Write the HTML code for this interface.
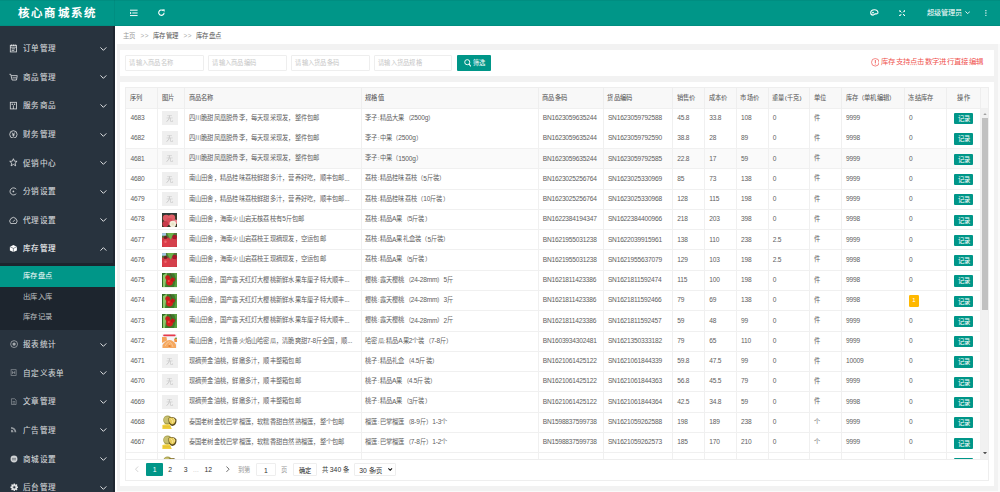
<!DOCTYPE html>
<html lang="zh-CN"><head><meta charset="utf-8">
<style>
*{box-sizing:border-box;margin:0;padding:0}
html,body{width:1000px;height:492px;overflow:hidden;background:#f2f2f2;font-family:"Liberation Sans",sans-serif;color:#666}
.abs{position:absolute}
#hdr{position:absolute;left:0;top:0;width:1000px;height:26px;background:#009688}
#logo{position:absolute;left:17.8px;top:5.8px;font-size:11.4px;line-height:14px;letter-spacing:2.25px;color:#fff;font-weight:bold;white-space:nowrap}
#side{position:absolute;left:0;top:26px;width:114.6px;height:466px;background:#28333e;overflow:hidden}
#side .edge{position:absolute;right:0;top:0;width:1.3px;height:100%;background:#1e2630}
.mi{position:absolute;left:0;width:113px;height:28.6px;color:rgba(255,255,255,.78)}
.mi .t{position:absolute;left:23px;top:0.9px;line-height:28.6px;font-size:7.6px;letter-spacing:.3px;-webkit-text-stroke:0.15px rgba(255,255,255,.5);white-space:nowrap}
.mi svg.ic{position:absolute;left:9.4px;top:9.5px;width:8.8px;height:8.8px}
.mi svg.ar{position:absolute;left:100px;top:12.4px;width:6.8px;height:4px;color:rgba(255,255,255,.85)}
.sub{position:absolute;left:0;width:113.3px;background:#1d252e}
.si{position:absolute;left:0;width:114.6px;height:20.8px;line-height:20.8px;font-size:7.3px;letter-spacing:0.3px;color:rgba(255,255,255,.72);padding-left:23.2px;white-space:nowrap}
.si.on{background:#009688;color:#fff}
#strip{position:absolute;left:114.6px;top:26px;width:2px;height:466px;background:#fff}
#crumb{position:absolute;left:114.6px;top:26px;width:886px;height:18px;background:#fff;font-size:6.4px;letter-spacing:0.5px;line-height:18px;white-space:nowrap}
#crumb span{position:absolute;top:1.1px}
.card{position:absolute;left:119.6px;width:874.7px;background:#fff}
.inp{position:absolute;top:5.3px;height:15.8px;width:78.2px;border:0.55px solid #eee;border-radius:1px;font-size:6.25px;letter-spacing:0.26px;line-height:14.3px;color:#c6c6c6;padding-left:3px;white-space:nowrap;background:#fff}
.btn{position:absolute;left:337.2px;top:5.3px;width:34.4px;height:15.8px;background:#009688;border-radius:1px;color:#fff;font-size:6.25px;line-height:15.6px}
#tip{position:absolute;left:751px;top:5.6px;height:14px;line-height:14px;font-size:7.4px;letter-spacing:0.3px;color:#ef5350;white-space:nowrap}
#tbl{position:absolute;left:5.9px;top:5.8px;width:863.5px;height:393.5px;border:0.55px solid #eee;overflow:hidden}
#thead{position:absolute;left:0;top:0;width:863.5px;height:20.2px;background:#f8f8f8;border-bottom:0.55px solid #f0f0f0}
.th{position:absolute;top:0;height:20.2px;line-height:20.2px;font-size:6.25px;letter-spacing:0.23px;color:#5a5a5a;-webkit-text-stroke:0.1px rgba(80,80,80,.5);padding-left:3.6px;border-right:0.55px solid #eee;white-space:nowrap;overflow:hidden}
.th.c,.td.c{text-align:center;padding-left:0}
#tbody{position:absolute;left:0;top:20.2px;width:863.5px;height:350.2px;overflow:hidden}
.tr{position:absolute;left:0;width:855px;height:20.27px;border-bottom:0.55px solid #f0f0f0;background:#fff}
.tr.nob{border-bottom-color:#fff}
.tr.hov{background:#fafafa}
.td{position:absolute;top:0;height:20.27px;line-height:18.4px;font-size:6.25px;letter-spacing:0.23px;color:#606060;padding-left:3.6px;border-right:0.55px solid #f0f0f0;white-space:nowrap;overflow:hidden}
.n{font-size:6.6px;letter-spacing:-0.19px;position:relative;top:0.4px}
.noimg{position:absolute;left:4px;top:2.2px;width:15.8px;height:14.2px;background:#efefef}
svg.pimg{position:absolute;left:4.1px;top:2.6px;width:15px;height:14.2px}
.rec{display:inline-block;width:19px;height:11.2px;line-height:11.2px;background:#009688;color:#fff;font-size:6.25px;border-radius:1px;vertical-align:middle;margin-top:0px;position:relative;top:0.9px;letter-spacing:0}
.badge{display:inline-block;width:10px;height:11.8px;line-height:11.8px;background:#ffb800;color:#fff;font-size:6px;border-radius:1.2px;text-align:center;vertical-align:middle;position:relative;top:1px;letter-spacing:0}
#vsb{position:absolute;left:855px;top:0;width:8px;height:350.2px;background:#f1f1f1}
#vsb .thumb{position:absolute;left:0.8px;top:9.5px;width:6.6px;height:191.6px;background:#c1c1c1}
#pager{position:absolute;left:0;top:370.4px;width:863.5px;height:22.5px;border-top:0.55px solid #eee;font-size:6.25px;color:#333}
#pager .p{position:absolute;top:2.9px;height:13.8px;line-height:13.8px;text-align:center}
</style></head><body>
<div id="hdr">
  <div class="abs" style="left:0;top:0;width:1000px;height:0.8px;background:rgba(0,0,0,.05)"></div><div class="abs" style="left:0;top:24.6px;width:1000px;height:1.4px;background:rgba(0,0,0,.05)"></div>
  <div id="logo">核心商城系统</div>
  <div class="abs" style="left:113.8px;top:0;width:0.6px;height:26px;background:rgba(0,0,0,.05)"></div>
  <svg class="abs" style="left:130px;top:9px" width="7.6" height="8" viewBox="0 0 7.6 8"><rect x="0" y="0.7" width="7.6" height="0.95" fill="#fff"/><rect x="2.3" y="3.5" width="5.3" height="0.95" fill="#fff"/><rect x="0" y="6.1" width="7.6" height="0.95" fill="#fff"/><path d="M0 2.8 L1.6 4 L0 5.2Z" fill="#fff"/></svg>
  <svg class="abs" style="left:157.8px;top:9.2px" width="7.4" height="7.4" viewBox="0 0 10 10"><path d="M8.2 5 A3.6 3.6 0 1 1 6.8 2.1" stroke="#fff" stroke-width="1.5" fill="none"/><path d="M5.6 0.4 L9.2 0.6 L8.6 4.2Z" fill="#fff"/></svg>
  <svg class="abs" style="left:870.2px;top:9.4px" width="8.8" height="6.8" viewBox="0 0 8.8 6.8"><path d="M7.9 4.2 C8.4 2.2 6.6 0.7 4.4 0.7 C2.1 0.7 0.7 2.3 0.7 3.8 C0.7 5.3 1.9 6.1 3.1 6.1 C4.2 6.1 4.3 5.1 5.2 4.9 C6.2 4.7 7.6 5.2 7.9 4.2Z" stroke="#fff" stroke-width="1.1" fill="none"/><circle cx="3" cy="3.6" r="0.9" fill="#fff"/></svg>
  <svg class="abs" style="left:898.9px;top:9.8px" width="6.4" height="6.4" viewBox="0 0 10 10"><path d="M1.2 1.2 L3.8 3.8 M8.8 1.2 L6.2 3.8 M1.2 8.8 L3.8 6.2 M8.8 8.8 L6.2 6.2" stroke="#fff" stroke-width="1.5" fill="none"/><circle cx="1.4" cy="1.4" r="1.2" fill="#fff"/><circle cx="8.6" cy="1.4" r="1.2" fill="#fff"/><circle cx="1.4" cy="8.6" r="1.2" fill="#fff"/><circle cx="8.6" cy="8.6" r="1.2" fill="#fff"/></svg>
  <div class="abs" style="left:926.5px;top:6px;font-size:7.1px;line-height:14px;color:#fff;white-space:nowrap">超级管理员</div>
  <svg class="abs" style="left:965px;top:11.4px" width="5.4" height="3.2" viewBox="0 0 10 6"><path d="M0.8 0.8 L5 5 L9.2 0.8" stroke="#fff" stroke-width="1.7" fill="none"/></svg>
  <svg class="abs" style="left:985.1px;top:10.2px" width="1.8" height="6" viewBox="0 0 2 9"><circle cx="1" cy="1" r="1" fill="#fff"/><circle cx="1" cy="4.5" r="1" fill="#fff"/><circle cx="1" cy="8" r="1" fill="#fff"/></svg>
</div>
<div id="side">
<div class="edge"></div>
<div class="mi" style="top:8.4px"><svg class="ic" style="width:8.8px;height:8.8px;left:9.4px;top:9.5px;opacity:1" viewBox="0 0 10 10"><rect x="1.5" y="1.5" width="7" height="7.5" stroke="currentColor" fill="none" stroke-width="1"/><path d="M1.5 3.6 H8.5 M3 0.5 V2.3 M5 0.5 V2.3 M7 0.5 V2.3" stroke="currentColor" fill="none" stroke-width="1"/><path d="M3 5.5 H7 M3 7.3 H6" stroke="currentColor" fill="none" stroke-width="1" stroke-width="0.7"/></svg><span class="t">订单管理</span><svg class="ar" viewBox="0 0 10 6"><path d="M0.6 0.6 L5 5 L9.4 0.6" stroke="currentColor" stroke-width="1.5" fill="none"/></svg></div>
<div class="mi" style="top:37px"><svg class="ic" style="width:8.8px;height:8.8px;left:9.4px;top:9.5px;opacity:1" viewBox="0 0 10 10"><path d="M0.5 1.5 H2 L3.5 8 H8.5 L9.4 3 H2.6" stroke="currentColor" fill="none" stroke-width="1"/><path d="M4 5.5 H8.5" stroke="currentColor" fill="none" stroke-width="1" stroke-width="0.8"/></svg><span class="t">商品管理</span><svg class="ar" viewBox="0 0 10 6"><path d="M0.6 0.6 L5 5 L9.4 0.6" stroke="currentColor" stroke-width="1.5" fill="none"/></svg></div>
<div class="mi" style="top:65.6px"><svg class="ic" style="width:8.8px;height:8.8px;left:9.4px;top:9.5px;opacity:1" viewBox="0 0 10 10"><rect x="1.5" y="1.5" width="7" height="7.5" stroke="currentColor" fill="none" stroke-width="1"/><circle cx="3.7" cy="3.6" r="0.9" fill="currentColor"/><circle cx="6.3" cy="3.6" r="0.9" fill="currentColor"/><path d="M5 5 V9" stroke="currentColor" fill="none" stroke-width="1"/></svg><span class="t">服务商品</span><svg class="ar" viewBox="0 0 10 6"><path d="M0.6 0.6 L5 5 L9.4 0.6" stroke="currentColor" stroke-width="1.5" fill="none"/></svg></div>
<div class="mi" style="top:94.2px"><svg class="ic" style="width:8.8px;height:8.8px;left:9.4px;top:9.5px;opacity:1" viewBox="0 0 10 10"><circle cx="5" cy="5" r="4.2" stroke="currentColor" fill="none" stroke-width="1"/><path d="M3.3 2.8 L5 5 L6.7 2.8 M3.3 5.6 H6.7 M5 5 V7.6" stroke="currentColor" fill="none" stroke-width="1" stroke-width="0.8"/></svg><span class="t">财务管理</span><svg class="ar" viewBox="0 0 10 6"><path d="M0.6 0.6 L5 5 L9.4 0.6" stroke="currentColor" stroke-width="1.5" fill="none"/></svg></div>
<div class="mi" style="top:122.8px"><svg class="ic" style="width:8.8px;height:8.8px;left:9.4px;top:9.5px;opacity:1" viewBox="0 0 10 10"><path d="M5 0.8 L6.2 3.6 L9.2 3.8 L6.9 5.8 L7.6 8.9 L5 7.3 L2.4 8.9 L3.1 5.8 L0.8 3.8 L3.8 3.6Z" stroke="currentColor" fill="none" stroke-width="1"/></svg><span class="t">促销中心</span><svg class="ar" viewBox="0 0 10 6"><path d="M0.6 0.6 L5 5 L9.4 0.6" stroke="currentColor" stroke-width="1.5" fill="none"/></svg></div>
<div class="mi" style="top:151.4px"><svg class="ic" style="width:8.8px;height:8.8px;left:9.4px;top:9.5px;opacity:1" viewBox="0 0 10 10"><path d="M8.3 2.5 A4 4 0 1 0 8.3 7.5" stroke="currentColor" fill="none" stroke-width="1" stroke-width="1.3"/><circle cx="5" cy="5" r="1" fill="currentColor"/></svg><span class="t">分销设置</span><svg class="ar" viewBox="0 0 10 6"><path d="M0.6 0.6 L5 5 L9.4 0.6" stroke="currentColor" stroke-width="1.5" fill="none"/></svg></div>
<div class="mi" style="top:180px"><svg class="ic" style="width:8.8px;height:8.8px;left:9.4px;top:9.5px;opacity:1" viewBox="0 0 10 10"><path d="M2 8.6 A4.1 4.1 0 1 1 8 8.6 Z" stroke="currentColor" fill="none" stroke-width="1" stroke-width="1.1"/><path d="M4.6 6.6 L6.8 4.2" stroke="currentColor" fill="none" stroke-width="1" stroke-width="1.1"/></svg><span class="t">代理设置</span><svg class="ar" viewBox="0 0 10 6"><path d="M0.6 0.6 L5 5 L9.4 0.6" stroke="currentColor" stroke-width="1.5" fill="none"/></svg></div>
<div class="mi" style="top:208.6px;color:#fff"><svg class="ic" style="width:8.8px;height:8.8px;left:9.4px;top:9.5px;opacity:1" viewBox="0 0 10 10"><path d="M5 1 L9 3 V7.4 L5 9.2 L1 7.4 V3Z" fill="currentColor"/><path d="M1 3 L5 5 L9 3 M5 5 V9" stroke="#28333e" stroke-width="0.6" fill="none"/></svg><span class="t">库存管理</span><svg class="ar" viewBox="0 0 10 6"><path d="M0.6 5.4 L5 1 L9.4 5.4" stroke="currentColor" stroke-width="1.5" fill="none"/></svg></div>
<div class="sub" style="top:237.2px;height:67.1px">
<div class="si on" style="top:2.6px">库存盘点</div>
<div class="si" style="top:23.4px">出库入库</div>
<div class="si" style="top:44.2px">库存记录</div>
</div>
<div class="mi" style="top:304.3px"><svg class="ic" style="width:8.2px;height:8.2px;left:9.7px;top:9.8px;opacity:0.75" viewBox="0 0 10 10"><circle cx="5" cy="5" r="4.2" stroke="currentColor" fill="none" stroke-width="1"/><circle cx="5" cy="5" r="2" fill="currentColor"/></svg><span class="t">报表统计</span><svg class="ar" viewBox="0 0 10 6"><path d="M0.6 0.6 L5 5 L9.4 0.6" stroke="currentColor" stroke-width="1.5" fill="none"/></svg></div>
<div class="mi" style="top:332.9px"><svg class="ic" style="width:7.2px;height:7.2px;left:10.2px;top:10.3px;opacity:0.6" viewBox="0 0 10 10"><rect x="1.5" y="1" width="7" height="8" stroke="currentColor" fill="none" stroke-width="1"/><path d="M3.5 3 V7 M6.5 3 V7 M3.5 5 H6.5" stroke="currentColor" fill="none" stroke-width="1" stroke-width="0.8"/></svg><span class="t">自定义表单</span><svg class="ar" viewBox="0 0 10 6"><path d="M0.6 0.6 L5 5 L9.4 0.6" stroke="currentColor" stroke-width="1.5" fill="none"/></svg></div>
<div class="mi" style="top:361.5px"><svg class="ic" style="width:7.2px;height:7.2px;left:10.2px;top:10.3px;opacity:0.6" viewBox="0 0 10 10"><path d="M2 1 H6.5 L8.5 3 V9 H2Z" stroke="currentColor" fill="none" stroke-width="1"/><path d="M3.5 5 H7 M3.5 7 H7" stroke="currentColor" fill="none" stroke-width="1" stroke-width="0.7"/></svg><span class="t">文章管理</span><svg class="ar" viewBox="0 0 10 6"><path d="M0.6 0.6 L5 5 L9.4 0.6" stroke="currentColor" stroke-width="1.5" fill="none"/></svg></div>
<div class="mi" style="top:390.1px"><svg class="ic" style="width:7px;height:7px;left:10.3px;top:10.4px;opacity:0.65" viewBox="0 0 10 10"><path d="M1.5 1.5 A7.5 7.5 0 0 1 9 9 H6.5 A5 5 0 0 0 1.5 4 Z" fill="currentColor"/><path d="M1.5 5.5 A3.5 3.5 0 0 1 5 9 H1.5Z" fill="currentColor"/></svg><span class="t">广告管理</span><svg class="ar" viewBox="0 0 10 6"><path d="M0.6 0.6 L5 5 L9.4 0.6" stroke="currentColor" stroke-width="1.5" fill="none"/></svg></div>
<div class="mi" style="top:418.7px"><svg class="ic" style="width:8px;height:8px;left:9.8px;top:9.9px;opacity:1" viewBox="0 0 10 10"><circle cx="5" cy="5" r="4.3" fill="currentColor"/><path d="M2.5 4.2 H7.5 M2.5 6 H7.5" stroke="#28333e" stroke-width="0.6"/></svg><span class="t">商城设置</span><svg class="ar" viewBox="0 0 10 6"><path d="M0.6 0.6 L5 5 L9.4 0.6" stroke="currentColor" stroke-width="1.5" fill="none"/></svg></div>
<div class="mi" style="top:447.3px"><svg class="ic" style="width:8.6px;height:8.6px;left:9.5px;top:9.6px;opacity:1" viewBox="0 0 10 10"><circle cx="5" cy="5" r="3.5" fill="currentColor"/><path d="M5 0.5 V2.5 M5 7.5 V9.5 M0.5 5 H2.5 M7.5 5 H9.5 M1.8 1.8 L3.2 3.2 M6.8 6.8 L8.2 8.2 M8.2 1.8 L6.8 3.2 M3.2 6.8 L1.8 8.2" stroke="currentColor" stroke-width="1.6"/><circle cx="5" cy="5" r="1.3" fill="#28333e"/></svg><span class="t">后台管理</span><svg class="ar" viewBox="0 0 10 6"><path d="M0.6 0.6 L5 5 L9.4 0.6" stroke="currentColor" stroke-width="1.5" fill="none"/></svg></div>
</div>
<div id="strip"></div>
<div id="crumb">
  <span style="left:8.3px;color:#999">主页</span>
  <span style="left:26px;color:#aaa">&gt;&gt;</span>
  <span style="left:38px;color:#555">库存管理</span>
  <span style="left:69px;color:#aaa">&gt;&gt;</span>
  <span style="left:81px;color:#555">库存盘点</span>
</div>
<div class="card" style="top:49.6px;height:26.4px">
  <div class="inp" style="left:5.8px">请输入商品名称</div>
  <div class="inp" style="left:88.8px">请输入商品编码</div>
  <div class="inp" style="left:171.8px">请输入货品条码</div>
  <div class="inp" style="left:254.6px">请输入货品规格</div>
  <div class="btn"><svg class="abs" style="left:6.8px;top:3.9px" width="7.4" height="8" viewBox="0 0 10 11"><circle cx="4.4" cy="4.4" r="3.5" stroke="#fff" stroke-width="1.3" fill="none"/><path d="M6.9 7 L9.4 10.2" stroke="#fff" stroke-width="1.5"/></svg><span class="abs" style="left:16.4px;top:0">筛选</span></div>
  <div id="tip"><svg class="abs" style="left:0;top:3px" width="8.6" height="8.6" viewBox="0 0 10 10"><circle cx="5" cy="5" r="4.4" stroke="#ef5350" stroke-width="0.8" fill="none"/><rect x="4.5" y="2.3" width="1" height="3.6" fill="#ef5350"/><rect x="4.5" y="6.6" width="1" height="1" fill="#ef5350"/></svg><span style="position:absolute;left:10.4px">库存支持点击数字进行直接编辑</span></div>
</div>
<div class="card" style="top:81.6px;height:404.4px">
  <div id="tbl">
    <div id="thead">
<div class="th" style="left:0px;width:31.6px">序列</div>
<div class="th" style="left:31.6px;width:27px">图片</div>
<div class="th" style="left:58.6px;width:176.5px">商品名称</div>
<div class="th" style="left:235.1px;width:177px">规格值</div>
<div class="th" style="left:412.1px;width:65.2px">商品条码</div>
<div class="th" style="left:477.3px;width:69.3px">货品编码</div>
<div class="th" style="left:546.6px;width:32px">销售价</div>
<div class="th" style="left:578.6px;width:31.8px">成本价</div>
<div class="th" style="left:610.4px;width:31.7px">市场价</div>
<div class="th" style="left:642.1px;width:41.5px">重量(千克)</div>
<div class="th" style="left:683.6px;width:31.9px">单位</div>
<div class="th" style="left:715.5px;width:62.9px">库存（单机编辑）</div>
<div class="th" style="left:778.4px;width:42.2px">冻结库存</div>
<div class="th c" style="left:820.6px;width:34px">操作</div>
<div class="th" style="left:854.6px;width:8.2px"></div>
    </div>
    <div id="tbody">
<div class="tr nob" style="top:0px">
<div class="td" style="left:0px;width:31.6px;padding-left:4.1px"><span class="n">4683</span></div>
<div class="td" style="left:31.6px;width:27px"><div class="noimg"><svg style="position:absolute;left:4.3px;top:4px;width:7.2px;height:7px" viewBox="0 0 10 10"><path d="M1.6 0.8 H8.4 M0.6 4.2 H9.4" stroke="#c0c0c0" stroke-width="0.65" fill="none"/><path d="M5 0.8 Q5.2 6.5 0.8 9.6" stroke="#b8b8b8" stroke-width="0.95" fill="none"/><path d="M6.3 4.2 V8.6 Q6.3 9.4 7.2 9.4 H9.2 V7.6" stroke="#c0c0c0" stroke-width="0.75" fill="none"/></svg></div></div>
<div class="td" style="left:58.6px;width:176.5px">四川脆甜凤凰脱骨李，每天现采现发，整件包邮</div>
<div class="td" style="left:235.1px;width:177px">李子:精品大果（<span class="n">2500g</span>）</div>
<div class="td" style="left:412.1px;width:65.2px;padding-left:4.1px"><span class="n">BN1623059635244</span></div>
<div class="td" style="left:477.3px;width:69.3px;padding-left:4.1px"><span class="n">SN1623059792588</span></div>
<div class="td" style="left:546.6px;width:32px;padding-left:4.1px"><span class="n">45.8</span></div>
<div class="td" style="left:578.6px;width:31.8px;padding-left:4.1px"><span class="n">33.8</span></div>
<div class="td" style="left:610.4px;width:31.7px;padding-left:4.1px"><span class="n">108</span></div>
<div class="td" style="left:642.1px;width:41.5px;padding-left:4.1px"><span class="n">0</span></div>
<div class="td" style="left:683.6px;width:31.9px">件</div>
<div class="td" style="left:715.5px;width:62.9px;padding-left:4.1px"><span class="n">9999</span></div>
<div class="td" style="left:778.4px;width:42.2px;padding-left:4.1px"><span class="n">0</span></div>
<div class="td c" style="left:820.6px;width:34px"><span class="rec">记录</span></div>
</div>
<div class="tr" style="top:20.27px">
<div class="td" style="left:0px;width:31.6px;padding-left:4.1px"><span class="n">4682</span></div>
<div class="td" style="left:31.6px;width:27px"><div class="noimg"><svg style="position:absolute;left:4.3px;top:4px;width:7.2px;height:7px" viewBox="0 0 10 10"><path d="M1.6 0.8 H8.4 M0.6 4.2 H9.4" stroke="#c0c0c0" stroke-width="0.65" fill="none"/><path d="M5 0.8 Q5.2 6.5 0.8 9.6" stroke="#b8b8b8" stroke-width="0.95" fill="none"/><path d="M6.3 4.2 V8.6 Q6.3 9.4 7.2 9.4 H9.2 V7.6" stroke="#c0c0c0" stroke-width="0.75" fill="none"/></svg></div></div>
<div class="td" style="left:58.6px;width:176.5px">四川脆甜凤凰脱骨李，每天现采现发，整件包邮</div>
<div class="td" style="left:235.1px;width:177px">李子:中果（<span class="n">2500g</span>）</div>
<div class="td" style="left:412.1px;width:65.2px;padding-left:4.1px"><span class="n">BN1623059635244</span></div>
<div class="td" style="left:477.3px;width:69.3px;padding-left:4.1px"><span class="n">SN1623059792590</span></div>
<div class="td" style="left:546.6px;width:32px;padding-left:4.1px"><span class="n">38.8</span></div>
<div class="td" style="left:578.6px;width:31.8px;padding-left:4.1px"><span class="n">28</span></div>
<div class="td" style="left:610.4px;width:31.7px;padding-left:4.1px"><span class="n">89</span></div>
<div class="td" style="left:642.1px;width:41.5px;padding-left:4.1px"><span class="n">0</span></div>
<div class="td" style="left:683.6px;width:31.9px">件</div>
<div class="td" style="left:715.5px;width:62.9px;padding-left:4.1px"><span class="n">9998</span></div>
<div class="td" style="left:778.4px;width:42.2px;padding-left:4.1px"><span class="n">0</span></div>
<div class="td c" style="left:820.6px;width:34px"><span class="rec">记录</span></div>
</div>
<div class="tr hov" style="top:40.54px">
<div class="td" style="left:0px;width:31.6px;padding-left:4.1px"><span class="n">4681</span></div>
<div class="td" style="left:31.6px;width:27px"><div class="noimg"><svg style="position:absolute;left:4.3px;top:4px;width:7.2px;height:7px" viewBox="0 0 10 10"><path d="M1.6 0.8 H8.4 M0.6 4.2 H9.4" stroke="#c0c0c0" stroke-width="0.65" fill="none"/><path d="M5 0.8 Q5.2 6.5 0.8 9.6" stroke="#b8b8b8" stroke-width="0.95" fill="none"/><path d="M6.3 4.2 V8.6 Q6.3 9.4 7.2 9.4 H9.2 V7.6" stroke="#c0c0c0" stroke-width="0.75" fill="none"/></svg></div></div>
<div class="td" style="left:58.6px;width:176.5px">四川脆甜凤凰脱骨李，每天现采现发，整件包邮</div>
<div class="td" style="left:235.1px;width:177px">李子:中果（<span class="n">1500g</span>）</div>
<div class="td" style="left:412.1px;width:65.2px;padding-left:4.1px"><span class="n">BN1623059635244</span></div>
<div class="td" style="left:477.3px;width:69.3px;padding-left:4.1px"><span class="n">SN1623059792585</span></div>
<div class="td" style="left:546.6px;width:32px;padding-left:4.1px"><span class="n">22.8</span></div>
<div class="td" style="left:578.6px;width:31.8px;padding-left:4.1px"><span class="n">17</span></div>
<div class="td" style="left:610.4px;width:31.7px;padding-left:4.1px"><span class="n">59</span></div>
<div class="td" style="left:642.1px;width:41.5px;padding-left:4.1px"><span class="n">0</span></div>
<div class="td" style="left:683.6px;width:31.9px">件</div>
<div class="td" style="left:715.5px;width:62.9px;padding-left:4.1px"><span class="n">9999</span></div>
<div class="td" style="left:778.4px;width:42.2px;padding-left:4.1px"><span class="n">0</span></div>
<div class="td c" style="left:820.6px;width:34px"><span class="rec">记录</span></div>
</div>
<div class="tr" style="top:60.81px">
<div class="td" style="left:0px;width:31.6px;padding-left:4.1px"><span class="n">4680</span></div>
<div class="td" style="left:31.6px;width:27px"><div class="noimg"><svg style="position:absolute;left:4.3px;top:4px;width:7.2px;height:7px" viewBox="0 0 10 10"><path d="M1.6 0.8 H8.4 M0.6 4.2 H9.4" stroke="#c0c0c0" stroke-width="0.65" fill="none"/><path d="M5 0.8 Q5.2 6.5 0.8 9.6" stroke="#b8b8b8" stroke-width="0.95" fill="none"/><path d="M6.3 4.2 V8.6 Q6.3 9.4 7.2 9.4 H9.2 V7.6" stroke="#c0c0c0" stroke-width="0.75" fill="none"/></svg></div></div>
<div class="td" style="left:58.6px;width:176.5px">南山田舍，精品桂味荔枝鲜甜多汁，营养好吃，顺丰包邮<span class="n">...</span></div>
<div class="td" style="left:235.1px;width:177px">荔枝:精品桂味荔枝（<span class="n">5</span>斤装）</div>
<div class="td" style="left:412.1px;width:65.2px;padding-left:4.1px"><span class="n">BN1623025256764</span></div>
<div class="td" style="left:477.3px;width:69.3px;padding-left:4.1px"><span class="n">SN1623025330969</span></div>
<div class="td" style="left:546.6px;width:32px;padding-left:4.1px"><span class="n">85</span></div>
<div class="td" style="left:578.6px;width:31.8px;padding-left:4.1px"><span class="n">73</span></div>
<div class="td" style="left:610.4px;width:31.7px;padding-left:4.1px"><span class="n">138</span></div>
<div class="td" style="left:642.1px;width:41.5px;padding-left:4.1px"><span class="n">0</span></div>
<div class="td" style="left:683.6px;width:31.9px">件</div>
<div class="td" style="left:715.5px;width:62.9px;padding-left:4.1px"><span class="n">9999</span></div>
<div class="td" style="left:778.4px;width:42.2px;padding-left:4.1px"><span class="n">0</span></div>
<div class="td c" style="left:820.6px;width:34px"><span class="rec">记录</span></div>
</div>
<div class="tr" style="top:81.08px">
<div class="td" style="left:0px;width:31.6px;padding-left:4.1px"><span class="n">4679</span></div>
<div class="td" style="left:31.6px;width:27px"><div class="noimg"><svg style="position:absolute;left:4.3px;top:4px;width:7.2px;height:7px" viewBox="0 0 10 10"><path d="M1.6 0.8 H8.4 M0.6 4.2 H9.4" stroke="#c0c0c0" stroke-width="0.65" fill="none"/><path d="M5 0.8 Q5.2 6.5 0.8 9.6" stroke="#b8b8b8" stroke-width="0.95" fill="none"/><path d="M6.3 4.2 V8.6 Q6.3 9.4 7.2 9.4 H9.2 V7.6" stroke="#c0c0c0" stroke-width="0.75" fill="none"/></svg></div></div>
<div class="td" style="left:58.6px;width:176.5px">南山田舍，精品桂味荔枝鲜甜多汁，营养好吃，顺丰包邮<span class="n">...</span></div>
<div class="td" style="left:235.1px;width:177px">荔枝:精品桂味荔枝（<span class="n">10</span>斤装）</div>
<div class="td" style="left:412.1px;width:65.2px;padding-left:4.1px"><span class="n">BN1623025256764</span></div>
<div class="td" style="left:477.3px;width:69.3px;padding-left:4.1px"><span class="n">SN1623025330968</span></div>
<div class="td" style="left:546.6px;width:32px;padding-left:4.1px"><span class="n">128</span></div>
<div class="td" style="left:578.6px;width:31.8px;padding-left:4.1px"><span class="n">115</span></div>
<div class="td" style="left:610.4px;width:31.7px;padding-left:4.1px"><span class="n">198</span></div>
<div class="td" style="left:642.1px;width:41.5px;padding-left:4.1px"><span class="n">0</span></div>
<div class="td" style="left:683.6px;width:31.9px">件</div>
<div class="td" style="left:715.5px;width:62.9px;padding-left:4.1px"><span class="n">9999</span></div>
<div class="td" style="left:778.4px;width:42.2px;padding-left:4.1px"><span class="n">0</span></div>
<div class="td c" style="left:820.6px;width:34px"><span class="rec">记录</span></div>
</div>
<div class="tr" style="top:101.35px">
<div class="td" style="left:0px;width:31.6px;padding-left:4.1px"><span class="n">4678</span></div>
<div class="td" style="left:31.6px;width:27px"><svg class="pimg" viewBox="0 0 15 14"><rect width="15" height="14" fill="#3a3a2a"/><rect x="0" y="0" width="15" height="1.6" fill="#2a3a3a"/><circle cx="4.2" cy="5" r="3.4" fill="#dc5a64"/><circle cx="9.8" cy="4.8" r="3.3" fill="#e06068"/><circle cx="7.4" cy="8.4" r="3.4" fill="#d84c5a"/><circle cx="3.4" cy="11" r="3" fill="#c83a4a"/><circle cx="13.4" cy="8.6" r="2.2" fill="#e88890"/><circle cx="10.8" cy="11" r="3.3" fill="#f2eedc"/><circle cx="10.8" cy="11" r="1.5" fill="#e8e2c4"/></svg></div>
<div class="td" style="left:58.6px;width:176.5px">南山田舍，海南火山岩无核荔枝有<span class="n">5</span>斤包邮</div>
<div class="td" style="left:235.1px;width:177px">荔枝:精品<span class="n">A</span>果（<span class="n">5</span>斤装）</div>
<div class="td" style="left:412.1px;width:65.2px;padding-left:4.1px"><span class="n">BN1622384194347</span></div>
<div class="td" style="left:477.3px;width:69.3px;padding-left:4.1px"><span class="n">SN1622384400966</span></div>
<div class="td" style="left:546.6px;width:32px;padding-left:4.1px"><span class="n">218</span></div>
<div class="td" style="left:578.6px;width:31.8px;padding-left:4.1px"><span class="n">203</span></div>
<div class="td" style="left:610.4px;width:31.7px;padding-left:4.1px"><span class="n">398</span></div>
<div class="td" style="left:642.1px;width:41.5px;padding-left:4.1px"><span class="n">0</span></div>
<div class="td" style="left:683.6px;width:31.9px">件</div>
<div class="td" style="left:715.5px;width:62.9px;padding-left:4.1px"><span class="n">9998</span></div>
<div class="td" style="left:778.4px;width:42.2px;padding-left:4.1px"><span class="n">0</span></div>
<div class="td c" style="left:820.6px;width:34px"><span class="rec">记录</span></div>
</div>
<div class="tr" style="top:121.62px">
<div class="td" style="left:0px;width:31.6px;padding-left:4.1px"><span class="n">4677</span></div>
<div class="td" style="left:31.6px;width:27px"><svg class="pimg" viewBox="0 0 15 14"><rect width="15" height="14" fill="#c83a44"/><rect x="0" y="0" width="15" height="4.5" fill="#4a7a3a"/><rect x="0" y="0" width="4" height="2.6" fill="#a8c8e8"/><path d="M5 0 H12 L8.5 7 Z" fill="#6cb04a"/><circle cx="12.6" cy="4" r="2.4" fill="#a8182a"/><circle cx="3.6" cy="4.4" r="1.8" fill="#6a2020"/><circle cx="4.4" cy="10" r="4.3" fill="#dc3c48"/><circle cx="11" cy="10" r="4.1" fill="#d4404c"/><circle cx="3.5" cy="8.6" r="1.2" fill="#ea6a70"/></svg></div>
<div class="td" style="left:58.6px;width:176.5px">南山田舍，海南火山岩荔枝王现摘现发，空运包邮</div>
<div class="td" style="left:235.1px;width:177px">荔枝:精品<span class="n">A</span>果礼盒装（<span class="n">5</span>斤装）</div>
<div class="td" style="left:412.1px;width:65.2px;padding-left:4.1px"><span class="n">BN1621955031238</span></div>
<div class="td" style="left:477.3px;width:69.3px;padding-left:4.1px"><span class="n">SN1622039915961</span></div>
<div class="td" style="left:546.6px;width:32px;padding-left:4.1px"><span class="n">138</span></div>
<div class="td" style="left:578.6px;width:31.8px;padding-left:4.1px"><span class="n">110</span></div>
<div class="td" style="left:610.4px;width:31.7px;padding-left:4.1px"><span class="n">238</span></div>
<div class="td" style="left:642.1px;width:41.5px;padding-left:4.1px"><span class="n">2.5</span></div>
<div class="td" style="left:683.6px;width:31.9px">件</div>
<div class="td" style="left:715.5px;width:62.9px;padding-left:4.1px"><span class="n">9999</span></div>
<div class="td" style="left:778.4px;width:42.2px;padding-left:4.1px"><span class="n">0</span></div>
<div class="td c" style="left:820.6px;width:34px"><span class="rec">记录</span></div>
</div>
<div class="tr" style="top:141.89px">
<div class="td" style="left:0px;width:31.6px;padding-left:4.1px"><span class="n">4676</span></div>
<div class="td" style="left:31.6px;width:27px"><svg class="pimg" viewBox="0 0 15 14"><rect width="15" height="14" fill="#c83a44"/><rect x="0" y="0" width="15" height="4.5" fill="#4a7a3a"/><rect x="0" y="0" width="4" height="2.6" fill="#a8c8e8"/><path d="M5 0 H12 L8.5 7 Z" fill="#6cb04a"/><circle cx="12.6" cy="4" r="2.4" fill="#a8182a"/><circle cx="3.6" cy="4.4" r="1.8" fill="#6a2020"/><circle cx="4.4" cy="10" r="4.3" fill="#dc3c48"/><circle cx="11" cy="10" r="4.1" fill="#d4404c"/><circle cx="3.5" cy="8.6" r="1.2" fill="#ea6a70"/></svg></div>
<div class="td" style="left:58.6px;width:176.5px">南山田舍，海南火山岩荔枝王现摘现发，空运包邮</div>
<div class="td" style="left:235.1px;width:177px">荔枝:精品<span class="n">A</span>果（<span class="n">5</span>斤装）</div>
<div class="td" style="left:412.1px;width:65.2px;padding-left:4.1px"><span class="n">BN1621955031238</span></div>
<div class="td" style="left:477.3px;width:69.3px;padding-left:4.1px"><span class="n">SN1621955637079</span></div>
<div class="td" style="left:546.6px;width:32px;padding-left:4.1px"><span class="n">129</span></div>
<div class="td" style="left:578.6px;width:31.8px;padding-left:4.1px"><span class="n">103</span></div>
<div class="td" style="left:610.4px;width:31.7px;padding-left:4.1px"><span class="n">198</span></div>
<div class="td" style="left:642.1px;width:41.5px;padding-left:4.1px"><span class="n">2.5</span></div>
<div class="td" style="left:683.6px;width:31.9px">件</div>
<div class="td" style="left:715.5px;width:62.9px;padding-left:4.1px"><span class="n">9998</span></div>
<div class="td" style="left:778.4px;width:42.2px;padding-left:4.1px"><span class="n">0</span></div>
<div class="td c" style="left:820.6px;width:34px"><span class="rec">记录</span></div>
</div>
<div class="tr" style="top:162.16px">
<div class="td" style="left:0px;width:31.6px;padding-left:4.1px"><span class="n">4675</span></div>
<div class="td" style="left:31.6px;width:27px"><svg class="pimg" viewBox="0 0 15 14"><rect width="15" height="14" fill="#3f7a2a"/><path d="M0 0 H3 L1.5 14 H0Z" fill="#2f6a20"/><path d="M1 2 L5 0 L3 14 L1 14Z" fill="#8ec86a"/><path d="M12 0 H15 V14 H12 L14 6Z" fill="#5aa040"/><path d="M8 0 L11 6" stroke="#5a3a2a" stroke-width="0.7"/><circle cx="5.6" cy="4.6" r="2.4" fill="#cc1a1a"/><circle cx="7.6" cy="9" r="3.4" fill="#d81e1e"/><circle cx="10.8" cy="6.6" r="2.1" fill="#c01818"/><circle cx="6.8" cy="8" r="1" fill="#f05050"/></svg></div>
<div class="td" style="left:58.6px;width:176.5px">南山田舍，国产露天红灯大樱桃新鲜水果车厘子特大顺丰<span class="n">...</span></div>
<div class="td" style="left:235.1px;width:177px">樱桃:露天樱桃（<span class="n">24-28mm</span>）<span class="n">5</span>斤</div>
<div class="td" style="left:412.1px;width:65.2px;padding-left:4.1px"><span class="n">BN1621811423386</span></div>
<div class="td" style="left:477.3px;width:69.3px;padding-left:4.1px"><span class="n">SN1621811592474</span></div>
<div class="td" style="left:546.6px;width:32px;padding-left:4.1px"><span class="n">115</span></div>
<div class="td" style="left:578.6px;width:31.8px;padding-left:4.1px"><span class="n">100</span></div>
<div class="td" style="left:610.4px;width:31.7px;padding-left:4.1px"><span class="n">198</span></div>
<div class="td" style="left:642.1px;width:41.5px;padding-left:4.1px"><span class="n">0</span></div>
<div class="td" style="left:683.6px;width:31.9px">件</div>
<div class="td" style="left:715.5px;width:62.9px;padding-left:4.1px"><span class="n">9998</span></div>
<div class="td" style="left:778.4px;width:42.2px;padding-left:4.1px"><span class="n">0</span></div>
<div class="td c" style="left:820.6px;width:34px"><span class="rec">记录</span></div>
</div>
<div class="tr" style="top:182.43px">
<div class="td" style="left:0px;width:31.6px;padding-left:4.1px"><span class="n">4674</span></div>
<div class="td" style="left:31.6px;width:27px"><svg class="pimg" viewBox="0 0 15 14"><rect width="15" height="14" fill="#3f7a2a"/><path d="M0 0 H3 L1.5 14 H0Z" fill="#2f6a20"/><path d="M1 2 L5 0 L3 14 L1 14Z" fill="#8ec86a"/><path d="M12 0 H15 V14 H12 L14 6Z" fill="#5aa040"/><path d="M8 0 L11 6" stroke="#5a3a2a" stroke-width="0.7"/><circle cx="5.6" cy="4.6" r="2.4" fill="#cc1a1a"/><circle cx="7.6" cy="9" r="3.4" fill="#d81e1e"/><circle cx="10.8" cy="6.6" r="2.1" fill="#c01818"/><circle cx="6.8" cy="8" r="1" fill="#f05050"/></svg></div>
<div class="td" style="left:58.6px;width:176.5px">南山田舍，国产露天红灯大樱桃新鲜水果车厘子特大顺丰<span class="n">...</span></div>
<div class="td" style="left:235.1px;width:177px">樱桃:露天樱桃（<span class="n">24-28mm</span>）<span class="n">3</span>斤</div>
<div class="td" style="left:412.1px;width:65.2px;padding-left:4.1px"><span class="n">BN1621811423386</span></div>
<div class="td" style="left:477.3px;width:69.3px;padding-left:4.1px"><span class="n">SN1621811592466</span></div>
<div class="td" style="left:546.6px;width:32px;padding-left:4.1px"><span class="n">79</span></div>
<div class="td" style="left:578.6px;width:31.8px;padding-left:4.1px"><span class="n">69</span></div>
<div class="td" style="left:610.4px;width:31.7px;padding-left:4.1px"><span class="n">138</span></div>
<div class="td" style="left:642.1px;width:41.5px;padding-left:4.1px"><span class="n">0</span></div>
<div class="td" style="left:683.6px;width:31.9px">件</div>
<div class="td" style="left:715.5px;width:62.9px;padding-left:4.1px"><span class="n">9998</span></div>
<div class="td" style="left:778.4px;width:42.2px;padding-left:4.1px"><span class="badge">1</span></div>
<div class="td c" style="left:820.6px;width:34px"><span class="rec">记录</span></div>
</div>
<div class="tr" style="top:202.7px">
<div class="td" style="left:0px;width:31.6px;padding-left:4.1px"><span class="n">4673</span></div>
<div class="td" style="left:31.6px;width:27px"><svg class="pimg" viewBox="0 0 15 14"><rect width="15" height="14" fill="#3f7a2a"/><path d="M0 0 H3 L1.5 14 H0Z" fill="#2f6a20"/><path d="M1 2 L5 0 L3 14 L1 14Z" fill="#8ec86a"/><path d="M12 0 H15 V14 H12 L14 6Z" fill="#5aa040"/><path d="M8 0 L11 6" stroke="#5a3a2a" stroke-width="0.7"/><circle cx="5.6" cy="4.6" r="2.4" fill="#cc1a1a"/><circle cx="7.6" cy="9" r="3.4" fill="#d81e1e"/><circle cx="10.8" cy="6.6" r="2.1" fill="#c01818"/><circle cx="6.8" cy="8" r="1" fill="#f05050"/></svg></div>
<div class="td" style="left:58.6px;width:176.5px">南山田舍，国产露天红灯大樱桃新鲜水果车厘子特大顺丰<span class="n">...</span></div>
<div class="td" style="left:235.1px;width:177px">樱桃:露天樱桃（<span class="n">24-28mm</span>）<span class="n">2</span>斤</div>
<div class="td" style="left:412.1px;width:65.2px;padding-left:4.1px"><span class="n">BN1621811423386</span></div>
<div class="td" style="left:477.3px;width:69.3px;padding-left:4.1px"><span class="n">SN1621811592457</span></div>
<div class="td" style="left:546.6px;width:32px;padding-left:4.1px"><span class="n">59</span></div>
<div class="td" style="left:578.6px;width:31.8px;padding-left:4.1px"><span class="n">48</span></div>
<div class="td" style="left:610.4px;width:31.7px;padding-left:4.1px"><span class="n">99</span></div>
<div class="td" style="left:642.1px;width:41.5px;padding-left:4.1px"><span class="n">0</span></div>
<div class="td" style="left:683.6px;width:31.9px">件</div>
<div class="td" style="left:715.5px;width:62.9px;padding-left:4.1px"><span class="n">9999</span></div>
<div class="td" style="left:778.4px;width:42.2px;padding-left:4.1px"><span class="n">0</span></div>
<div class="td c" style="left:820.6px;width:34px"><span class="rec">记录</span></div>
</div>
<div class="tr" style="top:222.97px">
<div class="td" style="left:0px;width:31.6px;padding-left:4.1px"><span class="n">4672</span></div>
<div class="td" style="left:31.6px;width:27px"><svg class="pimg" viewBox="0 0 15 14"><rect width="15" height="14" fill="#f4f4f8"/><rect x="1.2" y="0.3" width="12.4" height="1.8" rx="0.8" fill="#e8384a"/><path d="M0 3 H4.5 L5 6.5 L0 9Z" fill="#f3a45a"/><path d="M12 4.5 Q15 4 15 6 V8 L12.5 8Z" fill="#f09040"/><rect x="13" y="3.6" width="2" height="1.2" fill="#6aa040"/><path d="M0.5 14 L0.5 11 Q4 6 7.5 6 Q11 6 14 10.5 V14Z" fill="#f5a860"/><path d="M3 12 Q5 8 7.5 7.5 M7 14 L8 9 M11 13 Q10 9 8 8" stroke="#fcd0a0" stroke-width="0.7" fill="none"/><circle cx="7.5" cy="12" r="1.2" fill="#e88030"/></svg></div>
<div class="td" style="left:58.6px;width:176.5px">南山田舍，吐鲁番火焰山哈密瓜，清脆爽甜<span class="n">7-8</span>斤全国，顺<span class="n">...</span></div>
<div class="td" style="left:235.1px;width:177px">哈密瓜:精品<span class="n">A</span>果<span class="n">2</span>个装（<span class="n">7-8</span>斤）</div>
<div class="td" style="left:412.1px;width:65.2px;padding-left:4.1px"><span class="n">BN1603934302481</span></div>
<div class="td" style="left:477.3px;width:69.3px;padding-left:4.1px"><span class="n">SN1621350333182</span></div>
<div class="td" style="left:546.6px;width:32px;padding-left:4.1px"><span class="n">79</span></div>
<div class="td" style="left:578.6px;width:31.8px;padding-left:4.1px"><span class="n">65</span></div>
<div class="td" style="left:610.4px;width:31.7px;padding-left:4.1px"><span class="n">110</span></div>
<div class="td" style="left:642.1px;width:41.5px;padding-left:4.1px"><span class="n">0</span></div>
<div class="td" style="left:683.6px;width:31.9px">件</div>
<div class="td" style="left:715.5px;width:62.9px;padding-left:4.1px"><span class="n">9999</span></div>
<div class="td" style="left:778.4px;width:42.2px;padding-left:4.1px"><span class="n">0</span></div>
<div class="td c" style="left:820.6px;width:34px"><span class="rec">记录</span></div>
</div>
<div class="tr" style="top:243.24px">
<div class="td" style="left:0px;width:31.6px;padding-left:4.1px"><span class="n">4671</span></div>
<div class="td" style="left:31.6px;width:27px"><div class="noimg"><svg style="position:absolute;left:4.3px;top:4px;width:7.2px;height:7px" viewBox="0 0 10 10"><path d="M1.6 0.8 H8.4 M0.6 4.2 H9.4" stroke="#c0c0c0" stroke-width="0.65" fill="none"/><path d="M5 0.8 Q5.2 6.5 0.8 9.6" stroke="#b8b8b8" stroke-width="0.95" fill="none"/><path d="M6.3 4.2 V8.6 Q6.3 9.4 7.2 9.4 H9.2 V7.6" stroke="#c0c0c0" stroke-width="0.75" fill="none"/></svg></div></div>
<div class="td" style="left:58.6px;width:176.5px">现摘黄金油桃，鲜嫩多汁，顺丰整箱包邮</div>
<div class="td" style="left:235.1px;width:177px">桃子:精品礼盒（<span class="n">4.5</span>斤装）</div>
<div class="td" style="left:412.1px;width:65.2px;padding-left:4.1px"><span class="n">BN1621061425122</span></div>
<div class="td" style="left:477.3px;width:69.3px;padding-left:4.1px"><span class="n">SN1621061844339</span></div>
<div class="td" style="left:546.6px;width:32px;padding-left:4.1px"><span class="n">59.8</span></div>
<div class="td" style="left:578.6px;width:31.8px;padding-left:4.1px"><span class="n">47.5</span></div>
<div class="td" style="left:610.4px;width:31.7px;padding-left:4.1px"><span class="n">99</span></div>
<div class="td" style="left:642.1px;width:41.5px;padding-left:4.1px"><span class="n">0</span></div>
<div class="td" style="left:683.6px;width:31.9px">件</div>
<div class="td" style="left:715.5px;width:62.9px;padding-left:4.1px"><span class="n">10009</span></div>
<div class="td" style="left:778.4px;width:42.2px;padding-left:4.1px"><span class="n">0</span></div>
<div class="td c" style="left:820.6px;width:34px"><span class="rec">记录</span></div>
</div>
<div class="tr" style="top:263.51px">
<div class="td" style="left:0px;width:31.6px;padding-left:4.1px"><span class="n">4670</span></div>
<div class="td" style="left:31.6px;width:27px"><div class="noimg"><svg style="position:absolute;left:4.3px;top:4px;width:7.2px;height:7px" viewBox="0 0 10 10"><path d="M1.6 0.8 H8.4 M0.6 4.2 H9.4" stroke="#c0c0c0" stroke-width="0.65" fill="none"/><path d="M5 0.8 Q5.2 6.5 0.8 9.6" stroke="#b8b8b8" stroke-width="0.95" fill="none"/><path d="M6.3 4.2 V8.6 Q6.3 9.4 7.2 9.4 H9.2 V7.6" stroke="#c0c0c0" stroke-width="0.75" fill="none"/></svg></div></div>
<div class="td" style="left:58.6px;width:176.5px">现摘黄金油桃，鲜嫩多汁，顺丰整箱包邮</div>
<div class="td" style="left:235.1px;width:177px">桃子:精品<span class="n">A</span>果（<span class="n">4.5</span>斤装）</div>
<div class="td" style="left:412.1px;width:65.2px;padding-left:4.1px"><span class="n">BN1621061425122</span></div>
<div class="td" style="left:477.3px;width:69.3px;padding-left:4.1px"><span class="n">SN1621061844363</span></div>
<div class="td" style="left:546.6px;width:32px;padding-left:4.1px"><span class="n">56.8</span></div>
<div class="td" style="left:578.6px;width:31.8px;padding-left:4.1px"><span class="n">45.5</span></div>
<div class="td" style="left:610.4px;width:31.7px;padding-left:4.1px"><span class="n">79</span></div>
<div class="td" style="left:642.1px;width:41.5px;padding-left:4.1px"><span class="n">0</span></div>
<div class="td" style="left:683.6px;width:31.9px">件</div>
<div class="td" style="left:715.5px;width:62.9px;padding-left:4.1px"><span class="n">9999</span></div>
<div class="td" style="left:778.4px;width:42.2px;padding-left:4.1px"><span class="n">0</span></div>
<div class="td c" style="left:820.6px;width:34px"><span class="rec">记录</span></div>
</div>
<div class="tr" style="top:283.78px">
<div class="td" style="left:0px;width:31.6px;padding-left:4.1px"><span class="n">4669</span></div>
<div class="td" style="left:31.6px;width:27px"><div class="noimg"><svg style="position:absolute;left:4.3px;top:4px;width:7.2px;height:7px" viewBox="0 0 10 10"><path d="M1.6 0.8 H8.4 M0.6 4.2 H9.4" stroke="#c0c0c0" stroke-width="0.65" fill="none"/><path d="M5 0.8 Q5.2 6.5 0.8 9.6" stroke="#b8b8b8" stroke-width="0.95" fill="none"/><path d="M6.3 4.2 V8.6 Q6.3 9.4 7.2 9.4 H9.2 V7.6" stroke="#c0c0c0" stroke-width="0.75" fill="none"/></svg></div></div>
<div class="td" style="left:58.6px;width:176.5px">现摘黄金油桃，鲜嫩多汁，顺丰整箱包邮</div>
<div class="td" style="left:235.1px;width:177px">桃子:精品<span class="n">A</span>果（<span class="n">3</span>斤装）</div>
<div class="td" style="left:412.1px;width:65.2px;padding-left:4.1px"><span class="n">BN1621061425122</span></div>
<div class="td" style="left:477.3px;width:69.3px;padding-left:4.1px"><span class="n">SN1621061844364</span></div>
<div class="td" style="left:546.6px;width:32px;padding-left:4.1px"><span class="n">42.5</span></div>
<div class="td" style="left:578.6px;width:31.8px;padding-left:4.1px"><span class="n">34.8</span></div>
<div class="td" style="left:610.4px;width:31.7px;padding-left:4.1px"><span class="n">59</span></div>
<div class="td" style="left:642.1px;width:41.5px;padding-left:4.1px"><span class="n">0</span></div>
<div class="td" style="left:683.6px;width:31.9px">件</div>
<div class="td" style="left:715.5px;width:62.9px;padding-left:4.1px"><span class="n">9998</span></div>
<div class="td" style="left:778.4px;width:42.2px;padding-left:4.1px"><span class="n">0</span></div>
<div class="td c" style="left:820.6px;width:34px"><span class="rec">记录</span></div>
</div>
<div class="tr" style="top:304.05px">
<div class="td" style="left:0px;width:31.6px;padding-left:4.1px"><span class="n">4668</span></div>
<div class="td" style="left:31.6px;width:27px"><svg class="pimg" viewBox="0 0 15 14"><rect width="15" height="14" fill="#fff"/><ellipse cx="5.6" cy="5" rx="4.4" ry="4.6" fill="#a8a050"/><ellipse cx="5" cy="4.6" rx="3" ry="3.2" fill="#c8c070"/><path d="M6.5 3 Q12 0 14.5 4.5 Q14.8 10 10.5 11 Q7 10.5 6.5 6Z" fill="#5a4a1a"/><path d="M6.8 3.2 Q11.5 1 13.5 5 Q13.2 9 10 9.5 Q7.5 9 7 6Z" fill="#e8cc58"/><path d="M8.5 3.5 Q11 4.5 10.5 8 M11 2.5 Q13 4 12.2 7" stroke="#fff4c0" stroke-width="0.6" fill="none"/><path d="M0.4 10 Q4 8.6 8 9.4 L9.8 13.8 H0.4Z" fill="#f0d040"/><path d="M1 11.8 H8.4" stroke="#d0a828" stroke-width="0.5"/></svg></div>
<div class="td" style="left:58.6px;width:176.5px">泰国老树金枕巴掌榴莲，软糯香甜自然熟榴莲，整个包邮</div>
<div class="td" style="left:235.1px;width:177px">榴莲:巴掌榴莲（<span class="n">8-9</span>斤）<span class="n">1-3</span>个</div>
<div class="td" style="left:412.1px;width:65.2px;padding-left:4.1px"><span class="n">BN1598837599738</span></div>
<div class="td" style="left:477.3px;width:69.3px;padding-left:4.1px"><span class="n">SN1621059262588</span></div>
<div class="td" style="left:546.6px;width:32px;padding-left:4.1px"><span class="n">198</span></div>
<div class="td" style="left:578.6px;width:31.8px;padding-left:4.1px"><span class="n">189</span></div>
<div class="td" style="left:610.4px;width:31.7px;padding-left:4.1px"><span class="n">238</span></div>
<div class="td" style="left:642.1px;width:41.5px;padding-left:4.1px"><span class="n">0</span></div>
<div class="td" style="left:683.6px;width:31.9px">个</div>
<div class="td" style="left:715.5px;width:62.9px;padding-left:4.1px"><span class="n">9999</span></div>
<div class="td" style="left:778.4px;width:42.2px;padding-left:4.1px"><span class="n">0</span></div>
<div class="td c" style="left:820.6px;width:34px"><span class="rec">记录</span></div>
</div>
<div class="tr" style="top:324.32px">
<div class="td" style="left:0px;width:31.6px;padding-left:4.1px"><span class="n">4667</span></div>
<div class="td" style="left:31.6px;width:27px"><svg class="pimg" viewBox="0 0 15 14"><rect width="15" height="14" fill="#fff"/><ellipse cx="5.6" cy="5" rx="4.4" ry="4.6" fill="#a8a050"/><ellipse cx="5" cy="4.6" rx="3" ry="3.2" fill="#c8c070"/><path d="M6.5 3 Q12 0 14.5 4.5 Q14.8 10 10.5 11 Q7 10.5 6.5 6Z" fill="#5a4a1a"/><path d="M6.8 3.2 Q11.5 1 13.5 5 Q13.2 9 10 9.5 Q7.5 9 7 6Z" fill="#e8cc58"/><path d="M8.5 3.5 Q11 4.5 10.5 8 M11 2.5 Q13 4 12.2 7" stroke="#fff4c0" stroke-width="0.6" fill="none"/><path d="M0.4 10 Q4 8.6 8 9.4 L9.8 13.8 H0.4Z" fill="#f0d040"/><path d="M1 11.8 H8.4" stroke="#d0a828" stroke-width="0.5"/></svg></div>
<div class="td" style="left:58.6px;width:176.5px">泰国老树金枕巴掌榴莲，软糯香甜自然熟榴莲，整个包邮</div>
<div class="td" style="left:235.1px;width:177px">榴莲:巴掌榴莲（<span class="n">7-8</span>斤）<span class="n">1-2</span>个</div>
<div class="td" style="left:412.1px;width:65.2px;padding-left:4.1px"><span class="n">BN1598837599738</span></div>
<div class="td" style="left:477.3px;width:69.3px;padding-left:4.1px"><span class="n">SN1621059262573</span></div>
<div class="td" style="left:546.6px;width:32px;padding-left:4.1px"><span class="n">185</span></div>
<div class="td" style="left:578.6px;width:31.8px;padding-left:4.1px"><span class="n">170</span></div>
<div class="td" style="left:610.4px;width:31.7px;padding-left:4.1px"><span class="n">210</span></div>
<div class="td" style="left:642.1px;width:41.5px;padding-left:4.1px"><span class="n">0</span></div>
<div class="td" style="left:683.6px;width:31.9px">个</div>
<div class="td" style="left:715.5px;width:62.9px;padding-left:4.1px"><span class="n">9999</span></div>
<div class="td" style="left:778.4px;width:42.2px;padding-left:4.1px"><span class="n">0</span></div>
<div class="td c" style="left:820.6px;width:34px"><span class="rec">记录</span></div>
</div>
<div class="tr" style="top:344.59px">
<div class="td" style="left:0px;width:31.6px;padding-left:4.1px"></div>
<div class="td" style="left:31.6px;width:27px"><svg class="pimg" viewBox="0 0 15 14"><rect width="15" height="14" fill="#fff"/><ellipse cx="5.6" cy="5" rx="4.4" ry="4.6" fill="#a8a050"/><ellipse cx="5" cy="4.6" rx="3" ry="3.2" fill="#c8c070"/><path d="M6.5 3 Q12 0 14.5 4.5 Q14.8 10 10.5 11 Q7 10.5 6.5 6Z" fill="#5a4a1a"/><path d="M6.8 3.2 Q11.5 1 13.5 5 Q13.2 9 10 9.5 Q7.5 9 7 6Z" fill="#e8cc58"/><path d="M8.5 3.5 Q11 4.5 10.5 8 M11 2.5 Q13 4 12.2 7" stroke="#fff4c0" stroke-width="0.6" fill="none"/><path d="M0.4 10 Q4 8.6 8 9.4 L9.8 13.8 H0.4Z" fill="#f0d040"/><path d="M1 11.8 H8.4" stroke="#d0a828" stroke-width="0.5"/></svg></div>
<div class="td" style="left:58.6px;width:176.5px"></div>
<div class="td" style="left:235.1px;width:177px"></div>
<div class="td" style="left:412.1px;width:65.2px;padding-left:4.1px"></div>
<div class="td" style="left:477.3px;width:69.3px;padding-left:4.1px"></div>
<div class="td" style="left:546.6px;width:32px;padding-left:4.1px"></div>
<div class="td" style="left:578.6px;width:31.8px;padding-left:4.1px"></div>
<div class="td" style="left:610.4px;width:31.7px;padding-left:4.1px"></div>
<div class="td" style="left:642.1px;width:41.5px;padding-left:4.1px"></div>
<div class="td" style="left:683.6px;width:31.9px"></div>
<div class="td" style="left:715.5px;width:62.9px;padding-left:4.1px"></div>
<div class="td" style="left:778.4px;width:42.2px;padding-left:4.1px"></div>
<div class="td c" style="left:820.6px;width:34px"><span class="rec">记录</span></div>
</div>
      <div id="vsb"><div class="thumb"></div>
        <svg class="abs" style="left:2px;top:4px" width="4" height="2.4" viewBox="0 0 4 2.4"><path d="M0 2.4 L2 0 L4 2.4Z" fill="#a0a0a0"/></svg>
        <svg class="abs" style="left:2px;top:343.4px" width="4" height="2.4" viewBox="0 0 4 2.4"><path d="M0 0 L2 2.4 L4 0Z" fill="#505050"/></svg>
      </div>
    </div>
    <div id="pager">
<svg class="abs" style="left:8.6px;top:6.5px" width="3.6" height="6.4" viewBox="0 0 4 7"><path d="M3.5 0.5 L0.6 3.5 L3.5 6.5" stroke="#c2c2c2" stroke-width="0.8" fill="none"/></svg>
<div class="p" style="left:19.9px;width:16.4px;background:#009688;color:#fff;border-radius:1px;font-size:6.8px">1</div>
<div class="p" style="left:38.6px;width:10px;font-size:6.8px">2</div>
<div class="p" style="left:54.1px;width:10px;font-size:6.8px">3</div>
<div class="p" style="left:64.5px;width:10px;color:#999">…</div>
<div class="p" style="left:75.8px;width:12px;font-size:6.8px">12</div>
<svg class="abs" style="left:99.6px;top:6.5px" width="3.6" height="6.4" viewBox="0 0 4 7"><path d="M0.5 0.5 L3.4 3.5 L0.5 6.5" stroke="#333" stroke-width="0.8" fill="none"/></svg>
<div class="p" style="left:111.8px;color:#999">到第</div>
<div class="p" style="left:129.3px;width:20.1px;border:0.55px solid #eee;border-radius:1px;color:#333;line-height:13px;font-size:6.8px">1</div>
<div class="p" style="left:154.8px;color:#999">页</div>
<div class="p" style="left:166.8px;width:23.7px;border:0.55px solid #eee;border-radius:1px;line-height:13px;color:#222">确定</div>
<div class="p" style="left:195.6px;white-space:nowrap">共 <span style="font-size:6.8px">340</span> 条</div>
<div class="p" style="left:227.4px;width:41.7px;border:0.55px solid #eee;border-radius:1px;line-height:13px;text-align:left;padding-left:4.4px;white-space:nowrap"><span style="font-size:6.8px">30</span> 条/页</div>
<svg class="abs" style="left:262px;top:8.6px" width="4.4" height="2.8" viewBox="0 0 10 6"><path d="M0.8 0.8 L5 5 L9.2 0.8" stroke="#111" stroke-width="2.4" fill="none"/></svg>
    </div>
  </div>
</div>
<div class="abs" style="left:116.5px;top:490.6px;width:884px;height:1.4px;background:#fafafa"></div>
<div class="abs" style="left:998.3px;top:44px;width:1.7px;height:448px;background:#fafafa"></div>
</body></html>
